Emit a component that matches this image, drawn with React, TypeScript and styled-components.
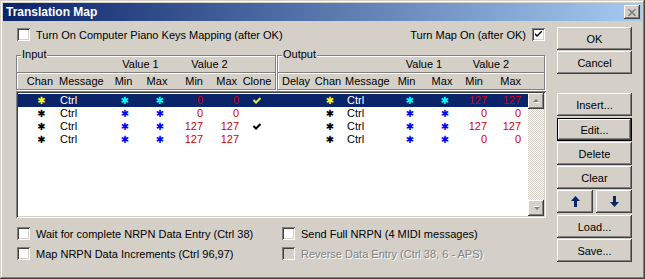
import React from "react";
import styled, { createGlobalStyle } from "styled-components";

const GlobalStyle = createGlobalStyle`
  html, body {
    margin: 0;
    padding: 0;
    background: #d4d0c8;
  }
  body {
    font-family: "Liberation Sans", Arial, sans-serif;
    font-size: 11px;
    color: #000;
  }
  * {
    box-sizing: border-box;
  }
`;

const raised = `
  box-shadow: inset -1px -1px #404040, inset 1px 1px #fff,
    inset -2px -2px #808080, inset 2px 2px #d4d0c8;
`;

const sunken = `
  box-shadow: inset 1px 1px #808080, inset -1px -1px #fff,
    inset 2px 2px #404040, inset -2px -2px #d4d0c8;
`;

const Window = styled.div`
  width: 645px;
  height: 279px;
  padding: 3px;
  background: #d4d0c8;
  box-shadow: inset -1px -1px #404040, inset 1px 1px #d4d0c8,
    inset -2px -2px #808080, inset 2px 2px #fff;
  display: flex;
  flex-direction: column;
`;

const TitleBar = styled.div`
  height: 18px;
  display: flex;
  align-items: center;
  justify-content: space-between;
  padding: 0 2px 0 3px;
  background: linear-gradient(to right, #0a246a, #a6caf0);
`;

const Title = styled.span`
  color: #fff;
  font-weight: bold;
  font-size: 12px;
`;

const CloseBtn = styled.div`
  width: 16px;
  height: 14px;
  background: #d4d0c8;
  display: flex;
  align-items: center;
  justify-content: center;
  ${raised}
`;

const Body = styled.div`
  flex: 1;
  display: flex;
  padding-left: 13px;
`;

const Main = styled.div`
  width: 530px;
  display: flex;
  flex-direction: column;
  padding-top: 7px;
`;

const TopRow = styled.div`
  height: 13px;
  display: flex;
  justify-content: space-between;
  align-items: center;
`;

const Option = styled.label<{ $disabled?: boolean }>`
  display: flex;
  align-items: center;
  gap: 6px;
  height: 13px;
  white-space: nowrap;
  color: ${(p) => (p.$disabled ? "#808080" : "#000")};
  text-shadow: ${(p) => (p.$disabled ? "1px 1px #fff" : "none")};
`;

const Box = styled.span<{ $disabled?: boolean; $side?: "left" | "right" }>`
  width: 13px;
  height: 13px;
  flex: none;
  display: flex;
  align-items: center;
  justify-content: center;
  background: ${(p) => (p.$disabled ? "#d4d0c8" : "#fff")};
  margin-left: ${(p) => (p.$side === "right" ? 0 : 1)}px;
  margin-right: ${(p) => (p.$side === "right" ? 1 : 0)}px;
  ${sunken}
`;

const Groups = styled.div`
  display: flex;
  gap: 1px;
  margin-top: 14px;
`;

const Group = styled.div<{ $w: number }>`
  position: relative;
  width: ${(p) => p.$w}px;
  border: 1px solid #808080;
  box-shadow: inset 1px 1px #fff, 1px 1px #fff;
`;

const Caption = styled.span`
  position: absolute;
  top: -8px;
  left: 4px;
  padding: 0 1px;
  line-height: 13px;
  background: #d4d0c8;
`;

const HeadRow = styled.div<{ $h: number }>`
  display: flex;
  align-items: center;
  height: ${(p) => p.$h}px;
  padding-left: 1px;
  white-space: nowrap;
`;

const Etch = styled.div`
  height: 2px;
  border-top: 1px solid #808080;
  border-bottom: 1px solid #fff;
`;

const Cell = styled.span<{ $w: number; $a?: string; $pl?: number; $pr?: number }>`
  flex: none;
  width: ${(p) => p.$w}px;
  height: 13px;
  text-align: ${(p) => p.$a || "left"};
  padding-left: ${(p) => p.$pl || 0}px;
  padding-right: ${(p) => p.$pr || 0}px;
  line-height: 13px;
  white-space: nowrap;
`;

const Gap = styled.span<{ $w: number }>`
  flex: none;
  width: ${(p) => p.$w}px;
`;

const List = styled.div`
  margin-top: 1px;
  height: 127px;
  padding: 2px;
  display: flex;
  background: #fff;
  ${sunken}
`;

const Rows = styled.div`
  flex: 1;
  padding-top: 1px;
`;

const Row = styled.div<{ $sel?: boolean }>`
  height: 13px;
  display: flex;
  align-items: center;
  background: ${(p) => (p.$sel ? "#0a246a" : "transparent")};
  color: ${(p) => (p.$sel ? "#fff" : "#000")};
`;

const Star = styled.span<{ $c: string }>`
  color: ${(p) => p.$c};
  font-family: "DejaVu Sans", sans-serif;
  font-size: 10px;
  line-height: 13px;
`;

const Num = styled.span`
  color: #d00000;
`;

const ScrollBar = styled.div`
  width: 16px;
  display: flex;
  flex-direction: column;
`;

const ScrollBtn = styled.div`
  width: 16px;
  height: 16px;
  background: #d4d0c8;
  display: flex;
  align-items: center;
  justify-content: center;
  ${raised}
`;

const Track = styled.div`
  flex: 1;
  background: repeating-conic-gradient(#d4d0c8 0 25%, #fff 0 50%) 0 0 / 2px 2px;
`;

const Options = styled.div`
  margin-top: 9px;
  display: grid;
  grid-template-columns: 265px 1fr;
  row-gap: 7px;
`;

const Buttons = styled.div`
  width: 75px;
  margin-left: 11px;
  padding-top: 6px;
  display: flex;
  flex-direction: column;
  gap: 1px;
`;

const Button = styled.div<{ $mt?: number; $default?: boolean; $w?: number }>`
  height: 23px;
  width: ${(p) => (p.$w ? `${p.$w}px` : "100%")};
  margin-top: ${(p) => p.$mt || 0}px;
  display: flex;
  align-items: center;
  justify-content: center;
  background: #d4d0c8;
  box-shadow: ${(p) =>
    p.$default
      ? "inset 0 0 0 1px #000, inset -2px -2px #404040, inset 2px 2px #fff, inset -3px -3px #808080, inset 3px 3px #d4d0c8"
      : "inset -1px -1px #404040, inset 1px 1px #fff, inset -2px -2px #808080, inset 2px 2px #d4d0c8"};
`;

const ArrowRow = styled.div`
  display: flex;
  justify-content: space-between;
`;

type Col = { w: number; ha?: string; hpl?: number; hpr?: number; da?: string; dpl?: number; dpr?: number };

const inputCols: Col[] = [
  { w: 37, ha: "right", hpr: 2, da: "center", dpl: 10 },
  { w: 52, hpl: 4, dpl: 5 },
  { w: 33, ha: "center", da: "center", dpl: 3 },
  { w: 34, ha: "center", da: "center", dpl: 6 },
  { w: 31, ha: "right", hpr: 2, da: "right", dpr: 2 },
  { w: 34, ha: "right", hpr: 2, da: "right" },
  { w: 36, ha: "center", da: "center", dpr: 1 },
];

const outputCols: Col[] = [
  { w: 33, hpl: 3 },
  { w: 32, ha: "center", da: "center", dpl: 4 },
  { w: 49, hpl: 1, dpl: 3 },
  { w: 34, ha: "center", hpr: 7, da: "center" },
  { w: 35, ha: "center", hpr: 5, da: "center", dpl: 1 },
  { w: 27, ha: "right", hpr: 6, da: "right", dpr: 2 },
  { w: 34, ha: "right", hpr: 2, da: "right", dpr: 2 },
];

const inputHeads = ["Chan", "Message", "Min", "Max", "Min", "Max", "Clone"];
const outputHeads = ["Delay", "Chan", "Message", "Min", "Max", "Min", "Max"];

type Entry = { sel?: boolean; inMin: string; inMax: string; clone: boolean; outMin: string; outMax: string };

const entries: Entry[] = [
  { sel: true, inMin: "0", inMax: "0", clone: true, outMin: "127", outMax: "127" },
  { inMin: "0", inMax: "0", clone: false, outMin: "0", outMax: "0" },
  { inMin: "127", inMax: "127", clone: true, outMin: "127", outMax: "127" },
  { inMin: "127", inMax: "127", clone: false, outMin: "0", outMax: "0" },
];

const Tick = ({ color }: { color: string }) => (
  <svg width="8" height="7" viewBox="0 0 8 7">
    <path d="M0.5 3 L3 5.5 L7.5 1" fill="none" stroke={color} strokeWidth="2" />
  </svg>
);

const CheckBox = ({ checked, disabled, side }: { checked?: boolean; disabled?: boolean; side?: "left" | "right" }) => (
  <Box $disabled={disabled} $side={side}>
    {checked && (
      <svg width="7" height="7" viewBox="0 0 7 7">
        <path d="M0 2 L0 4 L2 6 L7 1 L7 -1 L2 4 Z" fill="#000" />
      </svg>
    )}
  </Box>
);

const Arrow = ({ down }: { down?: boolean }) => (
  <svg width="9" height="11" viewBox="0 0 9 11">
    <g transform={down ? "rotate(180 4.5 5.5)" : undefined}>
      <path d="M4.5 0 L9 5 L6 5 L6 11 L3 11 L3 5 L0 5 Z" fill="#0a246a" />
    </g>
  </svg>
);

const ScrollArrow = ({ down }: { down?: boolean }) => (
  <svg width="9" height="6" viewBox="0 0 9 6">
    <g transform={down ? "rotate(180 4.5 3)" : undefined}>
      <path d="M2 5 L5 2 L8 5 Z" fill="#fff" />
      <path d="M1 4 L4 1 L7 4 Z" fill="#808080" />
    </g>
  </svg>
);

const headCells = (cols: Col[], heads: string[]) =>
  cols.map((c, i) => (
    <Cell key={i} $w={c.w} $a={c.ha} $pl={c.hpl} $pr={c.hpr}>
      {heads[i]}
    </Cell>
  ));

const App = () => {
  return (
    <>
      <GlobalStyle />
      <Window>
        <TitleBar>
          <Title>Translation Map</Title>
          <CloseBtn>
            <svg width="8" height="7" viewBox="0 0 8 7">
              <path d="M0.5 0 L7.5 7 M7.5 0 L0.5 7" stroke="#808080" strokeWidth="1.6" />
            </svg>
          </CloseBtn>
        </TitleBar>
        <Body>
          <Main>
            <TopRow>
              <Option>
                <CheckBox />
                Turn On Computer Piano Keys Mapping (after OK)
              </Option>
              <Option>
                Turn Map On (after OK)
                <CheckBox checked side="right" />
              </Option>
            </TopRow>

            <Groups>
              <Group $w={260}>
                <Caption>Input</Caption>
                <HeadRow $h={16}>
                  <Gap $w={89} />
                  <Cell $w={67} $a="center">Value 1</Cell>
                  <Cell $w={65} $a="center" $pl={6}>Value 2</Cell>
                </HeadRow>
                <Etch />
                <HeadRow $h={15}>{headCells(inputCols, inputHeads)}</HeadRow>
              </Group>
              <Group $w={268}>
                <Caption>Output</Caption>
                <HeadRow $h={16}>
                  <Gap $w={114} />
                  <Cell $w={69} $a="center" $pr={7}>Value 1</Cell>
                  <Cell $w={61} $a="center" $pr={3}>Value 2</Cell>
                </HeadRow>
                <Etch />
                <HeadRow $h={15}>{headCells(outputCols, outputHeads)}</HeadRow>
              </Group>
            </Groups>

            <List>
              <Rows>
                {entries.map((e, i) => {
                  const chan = e.sel ? "#ffff00" : "#000";
                  const val = e.sel ? "#00ffff" : "#0000ff";
                  const ic = inputCols;
                  const oc = outputCols;
                  return (
                    <Row key={i} $sel={e.sel}>
                      <Cell $w={ic[0].w} $a={ic[0].da} $pl={ic[0].dpl}>
                        <Star $c={chan}>✱</Star>
                      </Cell>
                      <Cell $w={ic[1].w} $pl={ic[1].dpl}>Ctrl</Cell>
                      <Cell $w={ic[2].w} $a={ic[2].da} $pl={ic[2].dpl}>
                        <Star $c={val}>✱</Star>
                      </Cell>
                      <Cell $w={ic[3].w} $a={ic[3].da} $pl={ic[3].dpl}>
                        <Star $c={val}>✱</Star>
                      </Cell>
                      <Cell $w={ic[4].w} $a={ic[4].da} $pr={ic[4].dpr}>
                        <Num>{e.inMin}</Num>
                      </Cell>
                      <Cell $w={ic[5].w} $a={ic[5].da} $pr={ic[5].dpr}>
                        <Num>{e.inMax}</Num>
                      </Cell>
                      <Cell $w={ic[6].w} $a={ic[6].da} $pr={ic[6].dpr}>
                        {e.clone && <Tick color={e.sel ? "#e0e840" : "#000"} />}
                      </Cell>
                      <Gap $w={4} />
                      <Cell $w={oc[0].w} />
                      <Cell $w={oc[1].w} $a={oc[1].da} $pl={oc[1].dpl}>
                        <Star $c={chan}>✱</Star>
                      </Cell>
                      <Cell $w={oc[2].w} $pl={oc[2].dpl}>Ctrl</Cell>
                      <Cell $w={oc[3].w} $a={oc[3].da}>
                        <Star $c={val}>✱</Star>
                      </Cell>
                      <Cell $w={oc[4].w} $a={oc[4].da} $pl={oc[4].dpl}>
                        <Star $c={val}>✱</Star>
                      </Cell>
                      <Cell $w={oc[5].w} $a={oc[5].da} $pr={oc[5].dpr}>
                        <Num>{e.outMin}</Num>
                      </Cell>
                      <Cell $w={oc[6].w} $a={oc[6].da} $pr={oc[6].dpr}>
                        <Num>{e.outMax}</Num>
                      </Cell>
                    </Row>
                  );
                })}
              </Rows>
              <ScrollBar>
                <ScrollBtn>
                  <ScrollArrow />
                </ScrollBtn>
                <Track />
                <ScrollBtn>
                  <ScrollArrow down />
                </ScrollBtn>
              </ScrollBar>
            </List>

            <Options>
              <Option>
                <CheckBox />
                Wait for complete NRPN Data Entry (Ctrl 38)
              </Option>
              <Option>
                <CheckBox />
                Send Full NRPN (4 MIDI messages)
              </Option>
              <Option>
                <CheckBox />
                Map NRPN Data Increments (Ctrl 96,97)
              </Option>
              <Option $disabled>
                <CheckBox disabled />
                Reverse Data Entry (Ctrl 38, 6 - APS)
              </Option>
            </Options>
          </Main>

          <Buttons>
            <Button>OK</Button>
            <Button>Cancel</Button>
            <Button $mt={18}>Insert...</Button>
            <Button $mt={1} $default>Edit...</Button>
            <Button>Delete</Button>
            <Button>Clear</Button>
            <ArrowRow>
              <Button $w={36}>
                <Arrow />
              </Button>
              <Button $w={36}>
                <Arrow down />
              </Button>
            </ArrowRow>
            <Button $mt={1}>Load...</Button>
            <Button>Save...</Button>
          </Buttons>
        </Body>
      </Window>
    </>
  );
};

export default App;
